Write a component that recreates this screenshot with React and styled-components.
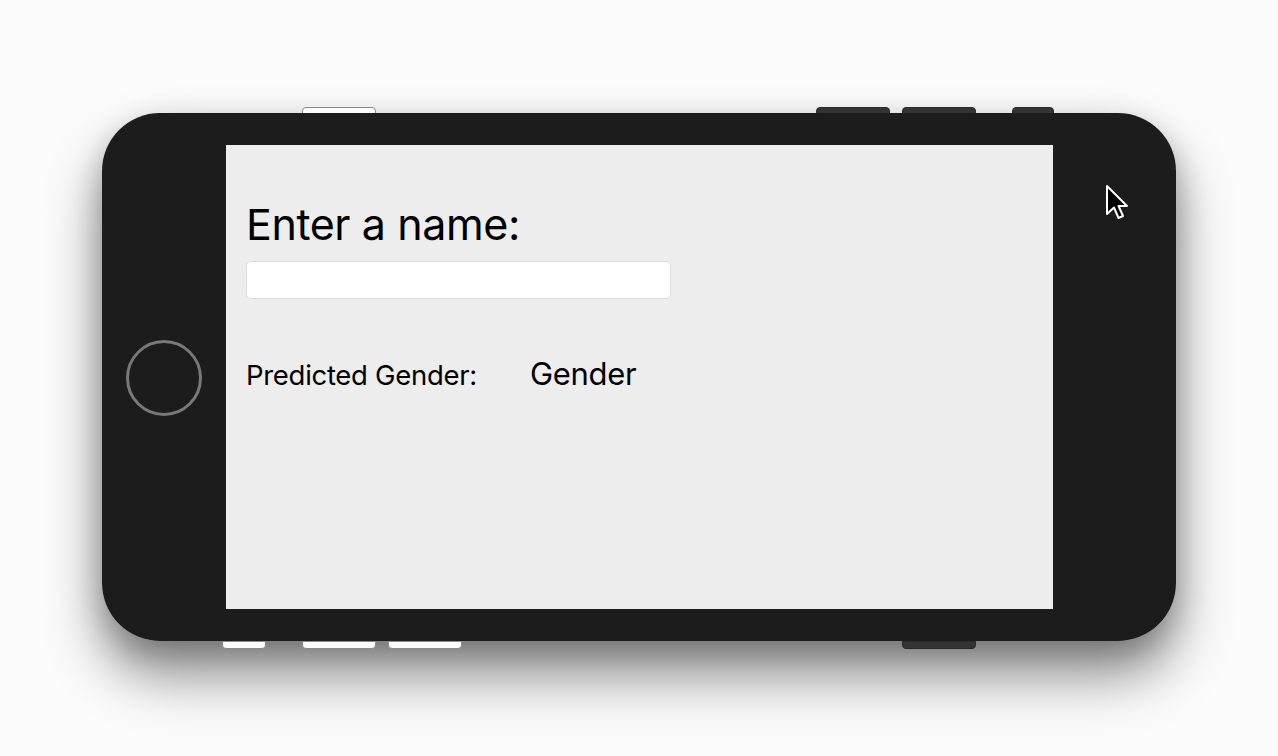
import React from 'react'
import styled, { createGlobalStyle } from 'styled-components'

const GlobalStyle = createGlobalStyle`
	html, body {
		margin: 0;
		padding: 0;
		background: #fbfbfb;
		font-family: Inter, "Noto Sans", sans-serif;
	}
`

const Stage = styled.div`
	width: 1278px;
	height: 756px;
	display: flex;
	align-items: center;
	justify-content: center;
	overflow: hidden;
`

// the wrapper carries the drop shadow so the side buttons can sit above it
const Device = styled.div`
	position: relative;
	margin-top: -2px;
	border-radius: 58px;
	box-shadow: 0 34px 55px rgba(0, 0, 0, 0.45), 0 10px 30px rgba(0, 0, 0, 0.2);
`

const Body = styled.div`
	position: relative;
	z-index: 1;
	width: 1074px;
	height: 528px;
	box-sizing: border-box;
	padding: 32px 0;
	background: #1c1c1c;
	border-radius: 58px;
	display: flex;
`

const ButtonRow = styled.div`
	position: absolute;
	left: 0;
	right: 0;
	${p => p.$bottom ? 'bottom: -8px;' : 'top: -6px;'}
	display: flex;
	z-index: 0;
`

const SideButton = styled.div`
	margin-left: ${p => p.$gap}px;
	width: ${p => p.$width}px;
	height: 8px;
	border-radius: ${p => p.$bottom ? '0 0 4px 4px' : '4px 4px 0 0'};
	background: ${p => p.$light ? '#fdfdfd' : '#343434'};
	border: 1px solid ${p => p.$light ? '#8a8a8a' : '#2a2a2a'};
	box-sizing: border-box;
`

const Bezel = styled.div`
	width: ${p => p.$width}px;
	display: flex;
	align-items: center;
	justify-content: center;
	position: relative;
`

const HomeButton = styled.div`
	width: 76px;
	height: 76px;
	margin-top: 2px;
	box-sizing: border-box;
	border-radius: 50%;
	border: 3px solid #787878;
`

const Cursor = styled.svg`
	position: absolute;
	left: 52px;
	top: 39px;
`

const Screen = styled.main`
	flex: 1;
	background: #ededed;
	padding: 54px 20px 0;
	display: flex;
	flex-direction: column;
	color: #000;
`

const Title = styled.h1`
	margin: 0;
	font-size: 43px;
	font-weight: 400;
	line-height: 50px;
	letter-spacing: -0.4px;
`

const NameInput = styled.input`
	margin-top: 12px;
	width: 425px;
	height: 38px;
	box-sizing: border-box;
	border: 1px solid #dcdcdc;
	border-radius: 5px;
	background: #fff;
	outline: none;
`

const ResultRow = styled.div`
	margin-top: 56px;
	display: flex;
	align-items: baseline;
`

const Label = styled.span`
	font-size: 27.5px;
	width: 284px;
	letter-spacing: -0.3px;
`

const Value = styled.span`
	font-size: 31px;
	letter-spacing: -0.3px;
`

function App() {
	return (
		<Stage>
			<GlobalStyle />
			<Device>
				<ButtonRow>
					<SideButton $gap={200} $width={74} $light />
					<SideButton $gap={440} $width={74} />
					<SideButton $gap={12} $width={74} />
					<SideButton $gap={36} $width={42} />
				</ButtonRow>
				<ButtonRow $bottom>
					<SideButton $bottom $gap={120} $width={44} $light />
					<SideButton $bottom $gap={36} $width={74} $light />
					<SideButton $bottom $gap={12} $width={74} $light />
					<SideButton $bottom $gap={440} $width={74} />
				</ButtonRow>
				<Body>
					<Bezel $width={124}>
						<HomeButton />
					</Bezel>
					<Screen>
						<Title>Enter a name:</Title>
						<NameInput />
						<ResultRow>
							<Label>Predicted Gender:</Label>
							<Value>Gender</Value>
						</ResultRow>
					</Screen>
					<Bezel $width={123}>
						<Cursor width="26" height="38" viewBox="0 0 26 38">
							<path d="M2 2 L2 30 L9 23.5 L13.5 34 L18 32 L13.5 22 L22 22 Z" fill="#000" stroke="#fff" strokeWidth="2" strokeLinejoin="round" />
						</Cursor>
					</Bezel>
				</Body>
			</Device>
		</Stage>
	)
}

export default App
